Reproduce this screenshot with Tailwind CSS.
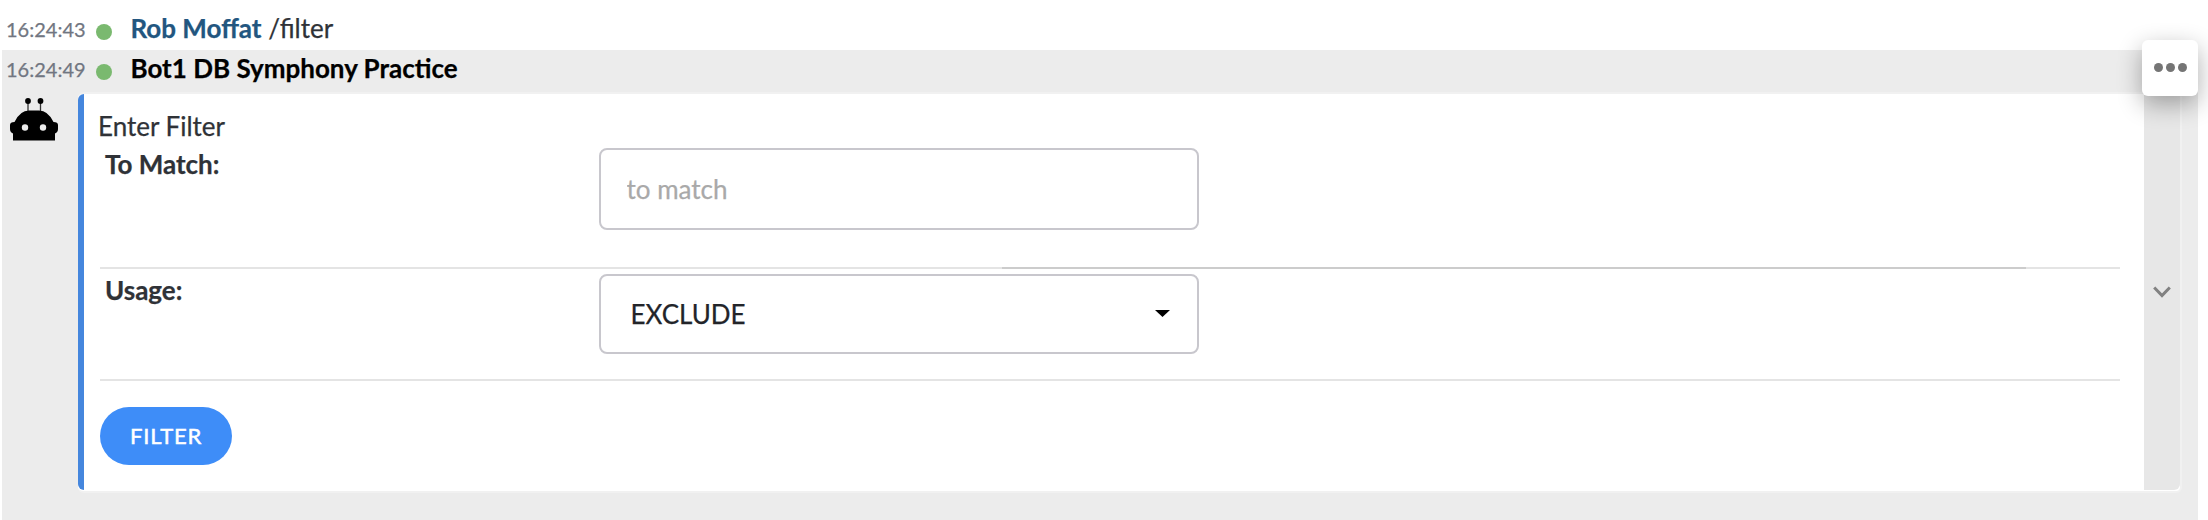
<!DOCTYPE html>
<html lang="en">
<head>
<meta charset="utf-8">
<title>Chat</title>
<script src="https://cdn.jsdelivr.net/npm/@tailwindcss/browser@4"></script>
</head>
<body class="bg-white">
<main class="relative w-[2208px] h-[520px] overflow-hidden bg-white font-['Lato',sans-serif] text-[26px] leading-10 text-[#2f3237] [-webkit-text-stroke:0.25px]">
  <div class="flex h-[50px] pt-2 pl-1.5">
    <time class="w-[90px] text-[20px] leading-[43px] text-[#717681]">16:24:43</time>
    <span class="mt-4 size-4 rounded-full bg-[#7ab96f]"></span>
    <p class="ml-[18.5px] whitespace-pre"><b class="text-[#22567f]">Rob Moffat</b> /filter</p>
  </div>
  <section class="ml-0.5 h-[470px] w-[2196px] bg-[#ececec]">
    <div class="flex h-[42px] pl-1">
      <time class="-mt-0.5 w-[90px] text-[20px] leading-[43px] text-[#717681]">16:24:49</time>
      <span class="mt-3.5 size-4 rounded-full bg-[#7ab96f]"></span>
      <p class="-mt-0.5 ml-[18.5px] font-bold text-black">Bot1 DB Symphony Practice</p>
    </div>
    <div class="flex">
      <svg class="mt-1.5 ml-2 h-[43px] w-12" viewBox="0 0 48 43">
        <path d="M18 3V15M30.500 3V15" stroke="#333" stroke-width="1.300"/>
        <circle cx="18" cy="3" r="2.900"/><circle cx="30.500" cy="3" r="2.900"/>
        <path d="M3 42.500V35.500Q0 34 0 31V27Q0 24 4.500 24Q10 12.500 19 12.500H29Q38 12.500 43.500 24Q48 24 48 27V31Q48 34 45 35.500V42.500Z"/>
        <circle cx="15" cy="29.500" r="3.200" fill="#ececec"/><circle cx="33" cy="29.500" r="3.200" fill="#ececec"/>
      </svg>
      <div class="ml-5 flex h-[401px] w-[2104px] rounded-md border-y-2 border-r-2 border-[#f1f1f1] bg-white">
        <div class="h-[396px] w-1.5 rounded-l-md bg-[#4586dd]"></div>
        <div class="w-[2060px] pl-4">
          <p class="h-[54px] pt-3 -ml-0.5">Enter Filter</p>
          <div class="relative flex h-[121px] w-[2020px] border-b-2 border-[#e4e4e4]">
            <label class="-mt-1 w-[499px] pl-[5px] font-bold" for="match">To Match:</label>
            <input id="match" class="h-[82px] w-[600px] rounded-lg border-2 border-[#c8c7cd] bg-white pl-[25.5px] placeholder:text-[#a9a9a9]" placeholder="to match">
            <span class="absolute -bottom-0.5 left-[902px] h-0.5 w-[1024px] bg-[#cccccc]"></span>
          </div>
          <div class="flex h-28 w-[2020px] border-b-2 border-[#e4e4e4] pt-[5px]">
            <span class="-mt-1 w-[499px] pl-[5px] font-bold">Usage:</span>
            <div class="flex h-20 w-[600px] items-center justify-between rounded-lg border-2 border-[#c8c7cd] pr-[27px] pl-[29.5px] text-[#222429]">
              <span>EXCLUDE</span>
              <svg class="mb-px h-[7px] w-[15px]" viewBox="0 0 15 7"><path d="M0 0H15L7.500 7Z" fill="#000"/></svg>
            </div>
          </div>
          <button class="mt-[26px] flex h-[58px] w-[132px] items-center justify-center rounded-full bg-[#3e8df8] pb-px text-[22px] tracking-[0.8px] text-white [-webkit-text-stroke:0.5px]">FILTER</button>
        </div>
        <div class="flex h-[396px] w-9 items-center justify-center rounded-br-md bg-[#e7e7e7]">
          <svg class="h-3 w-[18px]" viewBox="0 0 18 12"><path d="M1.200 1.500L9 9.500L16.800 1.500" fill="none" stroke="#818181" stroke-width="3"/></svg>
        </div>
      </div>
    </div>
  </section>
  <button class="absolute top-10 left-[2142px] flex size-14 items-center justify-center gap-[3px] rounded-md bg-white pb-px shadow-[0_8px_24px_rgba(0,0,0,0.32)]" aria-label="More">
    <span class="size-[9px] rounded-full bg-[#757575]"></span><span class="size-[9px] rounded-full bg-[#757575]"></span><span class="size-[9px] rounded-full bg-[#757575]"></span>
  </button>
</main>
</body>
</html>
